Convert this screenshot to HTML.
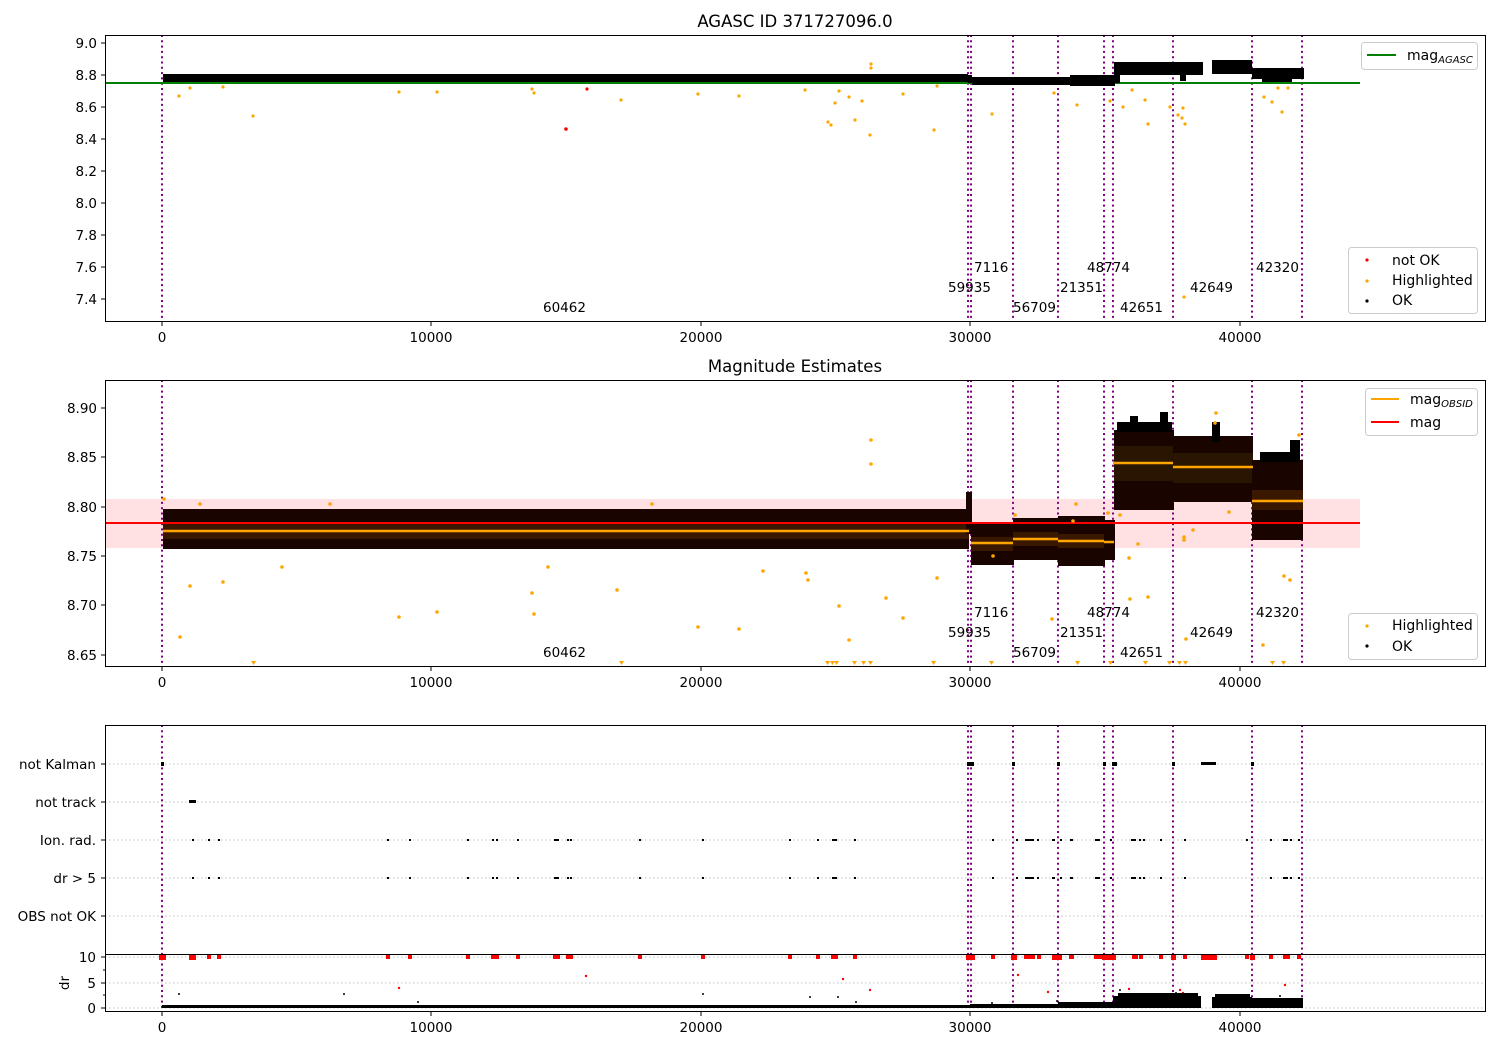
<!DOCTYPE html>
<html><head><meta charset="utf-8"><style>
html,body{margin:0;padding:0;background:#fff;}
svg{display:block;font-family:"DejaVu Sans","Liberation Sans",sans-serif;}
</style></head><body>
<svg width="1500" height="1050" viewBox="0 0 1500 1050" xmlns="http://www.w3.org/2000/svg">
<defs>
<g id="vl" stroke="#800080" stroke-width="2" stroke-dasharray="2,3.3">
<line x1="162" x2="162" y1="0" y2="286"/><line x1="968" x2="968" y1="0" y2="286"/><line x1="971" x2="971" y1="0" y2="286"/><line x1="1013" x2="1013" y1="0" y2="286"/><line x1="1058" x2="1058" y1="0" y2="286"/><line x1="1104" x2="1104" y1="0" y2="286"/><line x1="1113" x2="1113" y1="0" y2="286"/><line x1="1173" x2="1173" y1="0" y2="286"/><line x1="1252" x2="1252" y1="0" y2="286"/><line x1="1302" x2="1302" y1="0" y2="286"/>
</g>
<g id="xt" font-size="13.5" text-anchor="middle" fill="#000">
<g stroke="#000" stroke-width="1"><line x1="162" x2="162" y1="0" y2="4"/><line x1="431" x2="431" y1="0" y2="4"/><line x1="701" x2="701" y1="0" y2="4"/><line x1="970" x2="970" y1="0" y2="4"/><line x1="1240" x2="1240" y1="0" y2="4"/></g>
<text x="162" y="20">0</text><text x="431" y="20">10000</text><text x="701" y="20">20000</text><text x="970" y="20">30000</text><text x="1240" y="20">40000</text>
</g>
<g id="ob" font-size="13.5" fill="#000">
<text x="974" y="0">7116</text><text x="1087" y="0">48774</text><text x="1256" y="0">42320</text>
<text x="948" y="20">59935</text><text x="1060" y="20">21351</text><text x="1190" y="20">42649</text>
<text x="543" y="40">60462</text><text x="1013" y="40">56709</text><text x="1120" y="40">42651</text>
</g>
</defs>

<!-- ===== Panel 1 ===== -->
<text x="795" y="27" font-size="16.5" text-anchor="middle">AGASC ID 371727096.0</text>
<g transform="translate(0,35)"><use href="#vl"/></g>
<line x1="105" x2="1360" y1="83" y2="83" stroke="#008000" stroke-width="2"/>
<rect x="163" y="74" width="805" height="8" fill="#000"/>
<rect x="968" y="75" width="4" height="8" fill="#000"/>
<rect x="972" y="77" width="142" height="8" fill="#000"/>
<rect x="1070" y="75" width="45" height="11" fill="#000"/>
<rect x="1114" y="62" width="89" height="13" fill="#000"/>
<rect x="1114" y="75" width="6" height="8" fill="#000"/>
<rect x="1180" y="75" width="6" height="6" fill="#000"/>
<rect x="1212" y="60" width="40" height="14" fill="#000"/>
<rect x="1252" y="68" width="52" height="11" fill="#000"/>
<rect x="1262" y="78" width="30" height="4" fill="#000"/>
<g fill="#ffa500">
<circle cx="179" cy="96" r="1.6"/><circle cx="190" cy="88" r="1.6"/><circle cx="223" cy="87" r="1.6"/><circle cx="253" cy="116" r="1.6"/><circle cx="399" cy="92" r="1.6"/><circle cx="437" cy="92" r="1.6"/><circle cx="532" cy="89" r="1.6"/><circle cx="534" cy="93" r="1.6"/><circle cx="621" cy="100" r="1.6"/><circle cx="698" cy="94" r="1.6"/><circle cx="739" cy="96" r="1.6"/><circle cx="805" cy="90" r="1.6"/><circle cx="828" cy="122" r="1.6"/><circle cx="831" cy="125" r="1.6"/><circle cx="835" cy="103" r="1.6"/><circle cx="839" cy="91" r="1.6"/><circle cx="849" cy="97" r="1.6"/><circle cx="855" cy="120" r="1.6"/><circle cx="862" cy="101" r="1.6"/><circle cx="870" cy="135" r="1.6"/><circle cx="871" cy="64" r="1.6"/><circle cx="871" cy="68" r="1.6"/><circle cx="903" cy="94" r="1.6"/><circle cx="934" cy="130" r="1.6"/><circle cx="937" cy="86" r="1.6"/><circle cx="992" cy="114" r="1.6"/><circle cx="1054" cy="93" r="1.6"/><circle cx="1077" cy="105" r="1.6"/><circle cx="1110" cy="101" r="1.6"/><circle cx="1123" cy="107" r="1.6"/><circle cx="1132" cy="90" r="1.6"/><circle cx="1145" cy="100" r="1.6"/><circle cx="1148" cy="124" r="1.6"/><circle cx="1170" cy="107" r="1.6"/><circle cx="1178" cy="115" r="1.6"/><circle cx="1182" cy="118" r="1.6"/><circle cx="1183" cy="108" r="1.6"/><circle cx="1185" cy="124" r="1.6"/><circle cx="1184" cy="297" r="1.6"/><circle cx="1264" cy="97" r="1.6"/><circle cx="1272" cy="102" r="1.6"/><circle cx="1278" cy="88" r="1.6"/><circle cx="1282" cy="112" r="1.6"/><circle cx="1288" cy="88" r="1.6"/>
</g>
<circle cx="566" cy="129" r="1.8" fill="#f00"/><circle cx="587" cy="89" r="1.6" fill="#f00"/>
<g transform="translate(0,272)"><use href="#ob"/></g>
<rect x="105.5" y="35.5" width="1380" height="286" fill="none" stroke="#000"/>
<g font-size="13.5" text-anchor="end">
<g stroke="#000"><line x1="101" x2="105" y1="43" y2="43"/><line x1="101" x2="105" y1="75" y2="75"/><line x1="101" x2="105" y1="107" y2="107"/><line x1="101" x2="105" y1="139" y2="139"/><line x1="101" x2="105" y1="171" y2="171"/><line x1="101" x2="105" y1="203" y2="203"/><line x1="101" x2="105" y1="235" y2="235"/><line x1="101" x2="105" y1="267" y2="267"/><line x1="101" x2="105" y1="299" y2="299"/></g>
<text x="97" y="48">9.0</text><text x="97" y="80">8.8</text><text x="97" y="112">8.6</text><text x="97" y="144">8.4</text><text x="97" y="176">8.2</text><text x="97" y="208">8.0</text><text x="97" y="240">7.8</text><text x="97" y="272">7.6</text><text x="97" y="304">7.4</text>
</g>
<g transform="translate(0,322)"><use href="#xt"/></g>
<rect x="1361.5" y="42.5" width="116" height="27" rx="3" fill="#fff" fill-opacity="0.8" stroke="#ccc"/>
<line x1="1367" x2="1396" y1="55" y2="55" stroke="#008000" stroke-width="2"/>
<text x="1407" y="60" font-size="14">mag<tspan font-size="10" font-style="italic" dy="3">AGASC</tspan></text>
<rect x="1348.5" y="247.5" width="129" height="66" rx="3" fill="#fff" fill-opacity="0.8" stroke="#ccc"/>
<circle cx="1367" cy="260" r="1.6" fill="#f00"/><text x="1392" y="265" font-size="14">not OK</text>
<circle cx="1367" cy="281" r="1.6" fill="#ffa500"/><text x="1392" y="285" font-size="14">Highlighted</text>
<circle cx="1367" cy="301" r="1.6" fill="#000"/><text x="1392" y="305" font-size="14">OK</text>

<!-- ===== Panel 2 ===== -->
<text x="795" y="372" font-size="16.5" text-anchor="middle">Magnitude Estimates</text>
<rect x="105" y="499" width="1255" height="49" fill="#ffe0e3"/>
<g transform="translate(0,380)"><use href="#vl"/></g>
<rect x="163" y="509" width="806" height="40" fill="#1a0400"/>
<rect x="163" y="523" width="806" height="16" fill="#3a1800"/>
<rect x="966" y="492" width="6" height="42" fill="#1a0400"/>
<rect x="971" y="523" width="43" height="42" fill="#1a0400"/>
<rect x="971" y="537" width="43" height="14" fill="#3a1800"/>
<rect x="1013" y="518" width="46" height="42" fill="#1a0400"/>
<rect x="1013" y="532" width="46" height="14" fill="#3a1800"/>
<rect x="1058" y="516" width="47" height="50" fill="#1a0400"/>
<rect x="1058" y="534" width="47" height="14" fill="#3a1800"/>
<rect x="1104" y="520" width="11" height="40" fill="#1a0400"/>
<rect x="1114" y="430" width="60" height="80" fill="#1a0400"/>
<rect x="1117" y="422" width="55" height="10" fill="#000"/>
<rect x="1130" y="416" width="8" height="12" fill="#000"/>
<rect x="1160" y="412" width="8" height="14" fill="#000"/>
<rect x="1114" y="446" width="60" height="35" fill="#2a1600"/>
<rect x="1173" y="436" width="80" height="66" fill="#1a0400"/>
<rect x="1212" y="422" width="8" height="20" fill="#000"/>
<rect x="1173" y="453" width="80" height="30" fill="#2a1600"/>
<rect x="1252" y="460" width="51" height="80" fill="#1a0400"/>
<rect x="1260" y="452" width="40" height="10" fill="#000"/>
<rect x="1290" y="440" width="10" height="20" fill="#000"/>
<rect x="1252" y="490" width="51" height="20" fill="#3a1800"/>
<line x1="105" x2="1360" y1="523" y2="523" stroke="#f00" stroke-width="2"/>
<g stroke="#ffa500" stroke-width="2.5">
<line x1="163" x2="969" y1="531" y2="531"/><line x1="971" x2="1013" y1="543" y2="543"/><line x1="1013" x2="1058" y1="539" y2="539"/><line x1="1058" x2="1104" y1="541" y2="541"/><line x1="1104" x2="1114" y1="542" y2="542"/><line x1="1113" x2="1173" y1="463" y2="463"/><line x1="1173" x2="1253" y1="467" y2="467"/><line x1="1252" x2="1303" y1="501" y2="501"/>
</g>
<g fill="#ffa500">
<circle cx="164" cy="499" r="1.8"/><circle cx="180" cy="637" r="1.8"/><circle cx="190" cy="586" r="1.8"/><circle cx="223" cy="582" r="1.8"/><circle cx="200" cy="504" r="1.8"/><circle cx="282" cy="567" r="1.8"/><circle cx="330" cy="504" r="1.8"/><circle cx="399" cy="617" r="1.8"/><circle cx="437" cy="612" r="1.8"/><circle cx="532" cy="593" r="1.8"/><circle cx="534" cy="614" r="1.8"/><circle cx="548" cy="567" r="1.8"/><circle cx="617" cy="590" r="1.8"/><circle cx="652" cy="504" r="1.8"/><circle cx="698" cy="627" r="1.8"/><circle cx="739" cy="629" r="1.8"/><circle cx="763" cy="571" r="1.8"/><circle cx="806" cy="573" r="1.8"/><circle cx="808" cy="580" r="1.8"/><circle cx="839" cy="606" r="1.8"/><circle cx="849" cy="640" r="1.8"/><circle cx="871" cy="440" r="1.8"/><circle cx="871" cy="464" r="1.8"/><circle cx="886" cy="598" r="1.8"/><circle cx="903" cy="618" r="1.8"/><circle cx="937" cy="578" r="1.8"/><circle cx="993" cy="556" r="1.8"/><circle cx="1015" cy="515" r="1.8"/><circle cx="1052" cy="619" r="1.8"/><circle cx="1073" cy="521" r="1.8"/><circle cx="1076" cy="504" r="1.8"/><circle cx="1108" cy="513" r="1.8"/><circle cx="1120" cy="515" r="1.8"/><circle cx="1129" cy="558" r="1.8"/><circle cx="1130" cy="599" r="1.8"/><circle cx="1138" cy="544" r="1.8"/><circle cx="1148" cy="597" r="1.8"/><circle cx="1184" cy="537" r="1.8"/><circle cx="1184" cy="540" r="1.8"/><circle cx="1186" cy="639" r="1.8"/><circle cx="1193" cy="530" r="1.8"/><circle cx="1216" cy="413" r="1.8"/><circle cx="1215" cy="423" r="1.8"/><circle cx="1229" cy="512" r="1.8"/><circle cx="1263" cy="645" r="1.8"/><circle cx="1284" cy="576" r="1.8"/><circle cx="1299" cy="435" r="1.8"/><circle cx="1290" cy="580" r="1.8"/>
</g>
<g fill="#ffa500">
<path d="M251 661h5l-2.5 4z"/><path d="M619 661h5l-2.5 4z"/><path d="M825 661h5l-2.5 4z"/><path d="M830 661h5l-2.5 4z"/><path d="M834 661h5l-2.5 4z"/><path d="M852 661h5l-2.5 4z"/><path d="M861 661h5l-2.5 4z"/><path d="M868 661h5l-2.5 4z"/><path d="M931 661h5l-2.5 4z"/><path d="M989 661h5l-2.5 4z"/><path d="M1075 661h5l-2.5 4z"/><path d="M1108 661h5l-2.5 4z"/><path d="M1143 661h5l-2.5 4z"/><path d="M1167 661h5l-2.5 4z"/><path d="M1177 661h5l-2.5 4z"/><path d="M1183 661h5l-2.5 4z"/><path d="M1270 661h5l-2.5 4z"/><path d="M1281 661h5l-2.5 4z"/>
</g>
<g transform="translate(0,617)"><use href="#ob"/></g>
<rect x="105.5" y="380.5" width="1380" height="286" fill="none" stroke="#000"/>
<g font-size="13.5" text-anchor="end">
<g stroke="#000"><line x1="101" x2="105" y1="408" y2="408"/><line x1="101" x2="105" y1="457" y2="457"/><line x1="101" x2="105" y1="507" y2="507"/><line x1="101" x2="105" y1="556" y2="556"/><line x1="101" x2="105" y1="605" y2="605"/><line x1="101" x2="105" y1="655" y2="655"/></g>
<text x="97" y="413">8.90</text><text x="97" y="462">8.85</text><text x="97" y="512">8.80</text><text x="97" y="561">8.75</text><text x="97" y="610">8.70</text><text x="97" y="660">8.65</text>
</g>
<g transform="translate(0,667)"><use href="#xt"/></g>
<rect x="1365.5" y="388.5" width="112" height="47" rx="3" fill="#fff" fill-opacity="0.8" stroke="#ccc"/>
<line x1="1371" x2="1399" y1="399" y2="399" stroke="#ffa500" stroke-width="2"/>
<text x="1410" y="404" font-size="14">mag<tspan font-size="10" font-style="italic" dy="3">OBSID</tspan></text>
<line x1="1371" x2="1399" y1="422" y2="422" stroke="#f00" stroke-width="2"/>
<text x="1410" y="427" font-size="14">mag</text>
<rect x="1348.5" y="613.5" width="129" height="46" rx="3" fill="#fff" fill-opacity="0.8" stroke="#ccc"/>
<circle cx="1367" cy="626" r="1.6" fill="#ffa500"/><text x="1392" y="630" font-size="14">Highlighted</text>
<circle cx="1367" cy="646" r="1.6" fill="#000"/><text x="1392" y="651" font-size="14">OK</text>

<!-- ===== Panel 3 ===== -->
<g stroke="#b0b0b0" stroke-width="0.8" stroke-dasharray="1.5,2.5">
<line x1="105" x2="1485" y1="764" y2="764"/><line x1="105" x2="1485" y1="802" y2="802"/><line x1="105" x2="1485" y1="840" y2="840"/><line x1="105" x2="1485" y1="878" y2="878"/><line x1="105" x2="1485" y1="916" y2="916"/>
<line x1="105" x2="1485" y1="957" y2="957"/><line x1="105" x2="1485" y1="983" y2="983"/><line x1="105" x2="1485" y1="1008" y2="1008"/>
</g>
<g transform="translate(0,725)"><use href="#vl"/></g>
<g fill="#000">
<rect x="161" y="762" width="3" height="4"/><rect x="967" y="762" width="7" height="4"/><rect x="1012" y="762" width="3" height="4"/><rect x="1057" y="762" width="3" height="4"/><rect x="1103" y="762" width="3" height="4"/><rect x="1112" y="762" width="5" height="4"/><rect x="1172" y="762" width="3" height="4"/><rect x="1201" y="762" width="15" height="3"/><rect x="1251" y="762" width="3" height="4"/>
<rect x="189" y="800" width="7" height="3"/>
</g>
<g fill="#000">
<rect x="192" y="839" width="2" height="2"/><rect x="208" y="839" width="2" height="2"/><rect x="218" y="839" width="2" height="2"/><rect x="387" y="839" width="2" height="2"/><rect x="409" y="839" width="2" height="2"/><rect x="467" y="839" width="2" height="2"/><rect x="492" y="839" width="2" height="2"/><rect x="496" y="839" width="2" height="2"/><rect x="517" y="839" width="2" height="2"/><rect x="554" y="839" width="5" height="2"/><rect x="567" y="839" width="2" height="2"/><rect x="570" y="839" width="2" height="2"/><rect x="639" y="839" width="2" height="2"/><rect x="702" y="839" width="2" height="2"/><rect x="789" y="839" width="2" height="2"/><rect x="817" y="839" width="2" height="2"/><rect x="832" y="839" width="5" height="2"/><rect x="854" y="839" width="2" height="2"/><rect x="992" y="839" width="2" height="2"/><rect x="1016" y="839" width="2" height="2"/><rect x="1025" y="839" width="9" height="2"/><rect x="1037" y="839" width="2" height="2"/><rect x="1052" y="839" width="3" height="2"/><rect x="1060" y="839" width="2" height="2"/><rect x="1070" y="839" width="3" height="2"/><rect x="1095" y="839" width="5" height="2"/><rect x="1110" y="839" width="2" height="2"/><rect x="1131" y="839" width="5" height="2"/><rect x="1139" y="839" width="2" height="2"/><rect x="1143" y="839" width="2" height="2"/><rect x="1160" y="839" width="2" height="2"/><rect x="1184" y="839" width="2" height="2"/><rect x="1246" y="839" width="2" height="2"/><rect x="1270" y="839" width="2" height="2"/><rect x="1283" y="839" width="5" height="2"/><rect x="1290" y="839" width="2" height="2"/><rect x="1298" y="839" width="2" height="2"/>
</g>
<g fill="#000">
<rect x="192" y="877" width="2" height="2"/><rect x="208" y="877" width="2" height="2"/><rect x="218" y="877" width="2" height="2"/><rect x="387" y="877" width="2" height="2"/><rect x="409" y="877" width="2" height="2"/><rect x="467" y="877" width="2" height="2"/><rect x="492" y="877" width="2" height="2"/><rect x="496" y="877" width="2" height="2"/><rect x="517" y="877" width="2" height="2"/><rect x="554" y="877" width="5" height="2"/><rect x="567" y="877" width="2" height="2"/><rect x="570" y="877" width="2" height="2"/><rect x="639" y="877" width="2" height="2"/><rect x="702" y="877" width="2" height="2"/><rect x="789" y="877" width="2" height="2"/><rect x="817" y="877" width="2" height="2"/><rect x="832" y="877" width="5" height="2"/><rect x="854" y="877" width="2" height="2"/><rect x="992" y="877" width="2" height="2"/><rect x="1016" y="877" width="2" height="2"/><rect x="1025" y="877" width="9" height="2"/><rect x="1037" y="877" width="2" height="2"/><rect x="1052" y="877" width="3" height="2"/><rect x="1060" y="877" width="2" height="2"/><rect x="1070" y="877" width="3" height="2"/><rect x="1095" y="877" width="5" height="2"/><rect x="1110" y="877" width="2" height="2"/><rect x="1131" y="877" width="5" height="2"/><rect x="1139" y="877" width="2" height="2"/><rect x="1143" y="877" width="2" height="2"/><rect x="1160" y="877" width="2" height="2"/><rect x="1184" y="877" width="2" height="2"/><rect x="1270" y="877" width="2" height="2"/><rect x="1283" y="877" width="5" height="2"/><rect x="1290" y="877" width="2" height="2"/><rect x="1298" y="877" width="2" height="2"/>
</g>
<line x1="105" x2="1485" y1="954.5" y2="954.5" stroke="#000" stroke-width="1"/>
<g fill="#f00">
<rect x="159" y="955" width="7" height="5"/><rect x="189" y="955" width="7" height="5"/><rect x="207" y="955" width="4" height="4"/><rect x="217" y="955" width="4" height="4"/><rect x="386" y="955" width="4" height="4"/><rect x="408" y="955" width="4" height="4"/><rect x="466" y="955" width="4" height="4"/><rect x="491" y="955" width="8" height="4"/><rect x="516" y="955" width="4" height="4"/><rect x="553" y="955" width="7" height="4"/><rect x="566" y="955" width="7" height="4"/><rect x="638" y="955" width="4" height="4"/><rect x="701" y="955" width="4" height="4"/><rect x="788" y="955" width="4" height="4"/><rect x="816" y="955" width="4" height="4"/><rect x="831" y="955" width="7" height="4"/><rect x="853" y="955" width="4" height="4"/><rect x="966" y="955" width="9" height="5"/><rect x="991" y="955" width="4" height="4"/><rect x="1011" y="955" width="6" height="5"/><rect x="1024" y="955" width="11" height="4"/><rect x="1037" y="955" width="4" height="4"/><rect x="1052" y="955" width="10" height="5"/><rect x="1069" y="955" width="5" height="4"/><rect x="1094" y="955" width="8" height="4"/><rect x="1102" y="955" width="14" height="5"/><rect x="1132" y="955" width="6" height="4"/><rect x="1139" y="955" width="4" height="4"/><rect x="1159" y="955" width="4" height="4"/><rect x="1171" y="955" width="5" height="5"/><rect x="1183" y="955" width="4" height="4"/><rect x="1201" y="955" width="16" height="5"/><rect x="1245" y="955" width="4" height="4"/><rect x="1250" y="955" width="5" height="5"/><rect x="1269" y="955" width="4" height="4"/><rect x="1283" y="955" width="7" height="4"/><rect x="1297" y="955" width="4" height="4"/>
<circle cx="1018" cy="975" r="1.2"/><circle cx="1048" cy="992" r="1.2"/><circle cx="399" cy="988" r="1.2"/><circle cx="586" cy="976" r="1.2"/><circle cx="843" cy="979" r="1.2"/><circle cx="870" cy="990" r="1.2"/><circle cx="1129" cy="989" r="1.2"/><circle cx="1180" cy="990" r="1.2"/><circle cx="1183" cy="993" r="1.2"/><circle cx="1285" cy="985" r="1.2"/>
</g>
<g fill="#000">
<rect x="162" y="1005" width="808" height="3"/>
<rect x="970" y="1004" width="89" height="4"/>
<rect x="1058" y="1002" width="55" height="6"/>
<rect x="1113" y="996" width="88" height="12"/>
<rect x="1118" y="993" width="80" height="5"/>
<rect x="1212" y="997" width="40" height="11"/>
<rect x="1215" y="994" width="35" height="4"/>
<rect x="1252" y="998" width="51" height="10"/>
<circle cx="179" cy="994" r="1"/><circle cx="344" cy="994" r="1"/><circle cx="418" cy="1002" r="1"/><circle cx="703" cy="994" r="1"/><circle cx="810" cy="997" r="1"/><circle cx="838" cy="997" r="1"/><circle cx="856" cy="1002" r="1"/><circle cx="992" cy="1003" r="1"/><circle cx="1057" cy="1001" r="1"/><circle cx="1120" cy="990" r="1"/><circle cx="1176" cy="993" r="1"/><circle cx="1218" cy="995" r="1"/><circle cx="1280" cy="996" r="1"/>
</g>
<rect x="105.5" y="725.5" width="1380" height="286" fill="none" stroke="#000"/>
<g font-size="13.5" text-anchor="end">
<g stroke="#000"><line x1="101" x2="105" y1="764" y2="764"/><line x1="101" x2="105" y1="802" y2="802"/><line x1="101" x2="105" y1="840" y2="840"/><line x1="101" x2="105" y1="878" y2="878"/><line x1="101" x2="105" y1="916" y2="916"/><line x1="101" x2="105" y1="957" y2="957"/><line x1="101" x2="105" y1="983" y2="983"/><line x1="101" x2="105" y1="1008" y2="1008"/><line x1="103" x2="105" y1="970" y2="970"/><line x1="103" x2="105" y1="995" y2="995"/></g>
<text x="96" y="769">not Kalman</text><text x="96" y="807">not track</text><text x="96" y="845">Ion. rad.</text><text x="96" y="883">dr &gt; 5</text><text x="96" y="921">OBS not OK</text>
<text x="96" y="962">10</text><text x="96" y="988">5</text><text x="96" y="1013">0</text>
</g>
<text x="0" y="0" font-size="13.5" text-anchor="middle" transform="translate(69,983) rotate(-90)">dr</text>
<g transform="translate(0,1012)"><use href="#xt"/></g>
</svg>
</body></html>
